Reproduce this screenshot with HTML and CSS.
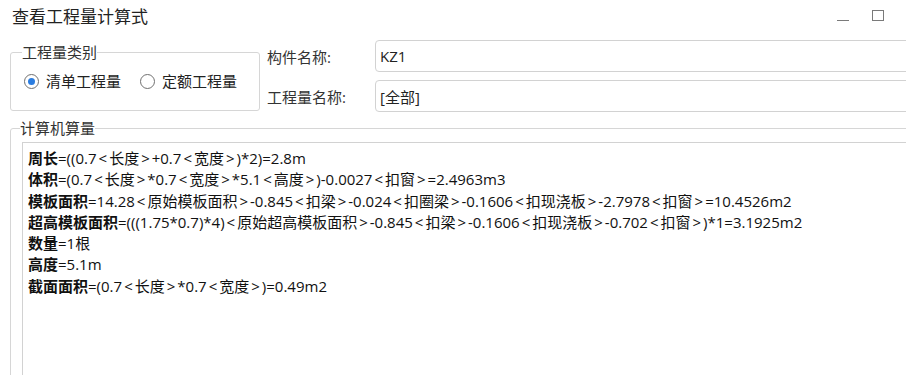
FILE: index.html
```html
<!DOCTYPE html>
<html lang="zh-CN">
<head>
<meta charset="utf-8">
<title>查看工程量计算式</title>
<link rel="stylesheet" href="styles.css">
</head>
<body>
<div class="window">
  <div class="titlebar">
    <span class="title">查看工程量计算式</span>
    <div class="controls">
      <span class="ctl min"></span>
      <span class="ctl max"></span>
      <span class="ctl close"></span>
    </div>
  </div>
  <div class="top">
    <fieldset class="group kind">
      <legend>工程量类别</legend>
      <label class="radio"><span class="dot checked"></span>清单工程量</label>
      <label class="radio"><span class="dot"></span>定额工程量</label>
    </fieldset>
    <div class="fields">
      <div class="row"><span class="lbl">构件名称:</span><div class="input">KZ1</div></div>
      <div class="row"><span class="lbl">工程量名称:</span><div class="input">[全部]</div></div>
    </div>
  </div>
  <fieldset class="group calc">
    <legend>计算机算量</legend>
    <div class="output">
      <div class="line"><b>周长</b>=((0.7<i class="br">&lt;</i>长度<i class="br">&gt;</i>+0.7<i class="br">&lt;</i>宽度<i class="br">&gt;</i>)*2)=2.8m</div>
      <div class="line"><b>体积</b>=(0.7<i class="br">&lt;</i>长度<i class="br">&gt;</i>*0.7<i class="br">&lt;</i>宽度<i class="br">&gt;</i>*5.1<i class="br">&lt;</i>高度<i class="br">&gt;</i>)-0.0027<i class="br">&lt;</i>扣窗<i class="br">&gt;</i>=2.4963m3</div>
      <div class="line"><b>模板面积</b>=14.28<i class="br">&lt;</i>原始模板面积<i class="br">&gt;</i>-0.845<i class="br">&lt;</i>扣梁<i class="br">&gt;</i>-0.024<i class="br">&lt;</i>扣圈梁<i class="br">&gt;</i>-0.1606<i class="br">&lt;</i>扣现浇板<i class="br">&gt;</i>-2.7978<i class="br">&lt;</i>扣窗<i class="br">&gt;</i>=10.4526m2</div>
      <div class="line"><b>超高模板面积</b>=(((1.75*0.7)*4)<i class="br">&lt;</i>原始超高模板面积<i class="br">&gt;</i>-0.845<i class="br">&lt;</i>扣梁<i class="br">&gt;</i>-0.1606<i class="br">&lt;</i>扣现浇板<i class="br">&gt;</i>-0.702<i class="br">&lt;</i>扣窗<i class="br">&gt;</i>)*1=3.1925m2</div>
      <div class="line"><b>数量</b>=1根</div>
      <div class="line"><b>高度</b>=5.1m</div>
      <div class="line"><b>截面面积</b>=(0.7<i class="br">&lt;</i>长度<i class="br">&gt;</i>*0.7<i class="br">&lt;</i>宽度<i class="br">&gt;</i>)=0.49m2</div>
    </div>
  </fieldset>
</div>
</body>
</html>
```
FILE: styles.css
```css
html, body {
  margin: 0;
  padding: 0;
  background: #fff;
  overflow: hidden;
}
body {
  font-family: "Open Sans", "Noto Sans CJK SC", sans-serif;
  color: #1f1f1f;
  font-size: 15px;
}
.window {
  width: 960px;
  height: 375px;
  overflow: hidden;
}
.titlebar {
  height: 35px;
  display: flex;
  align-items: flex-start;
  padding: 0 41px 0 12px;
  box-sizing: border-box;
}
.title {
  font-size: 17px;
  line-height: 20px;
  padding-top: 7px;
  color: #222;
}
.controls {
  margin-left: auto;
  display: flex;
  gap: 23px;
  padding-top: 10px;
}
.ctl {
  width: 12px;
  height: 11px;
  box-sizing: border-box;
}
.ctl.min {
  border-bottom: 1px solid #7a7a7a;
}
.ctl.max {
  border: 1px solid #7a7a7a;
}
.top {
  display: flex;
  align-items: flex-start;
  padding-top: 5px;
}
.group {
  margin: 0 0 0 10px;
  border: 1px solid #d6d6d6;
  border-radius: 3px;
  box-sizing: border-box;
  min-width: 0;
}
.group legend {
  padding: 0;
  margin-left: -2px;
  font-size: 15px;
  line-height: 20px;
  color: #333;
}
.kind {
  flex: none;
  width: 250px;
  margin-top: 2px;
  padding: 9px 0 19px 13px;
  display: flex;
  align-items: center;
}
.radio {
  display: flex;
  align-items: center;
  line-height: 20px;
  white-space: nowrap;
  flex: none;
  color: #222;
}
.radio + .radio {
  margin-left: 19px;
}
.dot {
  width: 15px;
  height: 15px;
  box-sizing: border-box;
  border: 1px solid #707070;
  border-radius: 50%;
  margin-right: 7px;
  display: flex;
  align-items: center;
  justify-content: center;
  flex: none;
}
.dot.checked::after {
  content: "";
  width: 7px;
  height: 7px;
  border-radius: 50%;
  background: #2b7de0;
}
.fields {
  flex: 1;
  margin-left: 7px;
  display: flex;
  flex-direction: column;
  gap: 8px;
}
.row {
  display: flex;
  align-items: center;
}
.lbl {
  width: 108px;
  flex: none;
  color: #333;
}
.input {
  flex: 1;
  height: 32px;
  box-sizing: border-box;
  border: 1px solid #d2d2d2;
  border-radius: 4px;
  padding-left: 4px;
  display: flex;
  align-items: center;
  color: #222;
}
.calc {
  margin-top: 6px;
  height: 300px;
  padding: 4px 0 0 11px;
}
.output {
  border: 1px solid #d2d2d2;
  height: 260px;
  padding: 5px 5px;
  box-sizing: border-box;
}
.line {
  line-height: 21.3px;
  white-space: nowrap;
  color: #111;
}
.line b {
  font-weight: 700;
}
.br {
  font-style: normal;
  margin: 0 2px;
}
```
